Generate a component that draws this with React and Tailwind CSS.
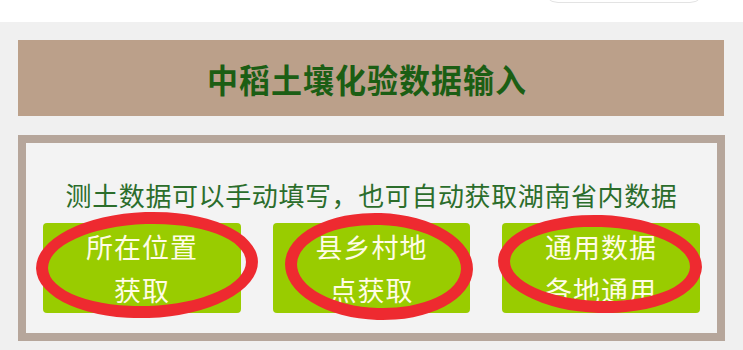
import React from "react";

const btns = [
  { w: "w-[198px]", l1: "所在位置", l2: "获取" },
  { w: "w-[197px]", l1: "县乡村地", l2: "点获取" },
  { w: "w-[198px]", l1: "通用数据", l2: "各地通用" },
];

export default function App() {
  return (
    <div
      className="relative w-[743px] h-[350px] overflow-hidden bg-[#f0f0f0]"
      style={{ fontFamily: '"Noto Sans CJK SC", "Noto Sans", sans-serif' }}
    >
      <div className="h-[22px] bg-white overflow-hidden">
        <div className="ml-[542px] -mt-[30px] w-[164px] h-[33px] rounded-[16px] border border-[#e3e3e3] bg-white" />
      </div>
      <div className="pl-[18px]">
        <div className="mt-[18px] w-[706px] h-[76px] bg-[#bba08a] flex items-center justify-center">
          <span className="text-[31px] font-bold tracking-[1px] text-[#1b5e14] leading-none -ml-[8px] scale-y-[1.05]">
            中稻土壤化验数据输入
          </span>
        </div>
        <div className="mt-[19px] w-[707px] h-[206px] border-[8px] border-[#b6a69b] bg-[#f3f3f3]">
          <div className="pt-[36px] text-center text-[26px] leading-[32px] tracking-[0.6px] text-[#2b6d2b]">
            测土数据可以手动填写，也可自动获取湖南省内数据
          </div>
          <div className="mt-[12px] pl-[17px] flex gap-[32px]">
            {btns.map((b, i) => (
              <div
                key={i}
                className={`${b.w} h-[90px] rounded-[4px] bg-[#99cc00] flex flex-col items-center justify-center text-[27px] leading-[43px] tracking-[1px] text-[#fffce6]`}
              >
                <span>{b.l1}</span>
                <span>{b.l2}</span>
              </div>
            ))}
          </div>
        </div>
      </div>
      <div className="absolute left-[36px] top-[212px] w-[222px] h-[106px] rounded-[50%] border-[12px] border-[#ee2a30] -rotate-[2deg]" />
      <div className="absolute left-[285px] top-[213px] w-[188px] h-[107px] rounded-[50%] border-[12px] border-[#ee2a30] rotate-[2deg]" />
      <div className="absolute left-[498px] top-[215px] w-[204px] h-[98px] rounded-[50%] border-[12px] border-[#ee2a30] rotate-[2deg]" />
    </div>
  );
}
